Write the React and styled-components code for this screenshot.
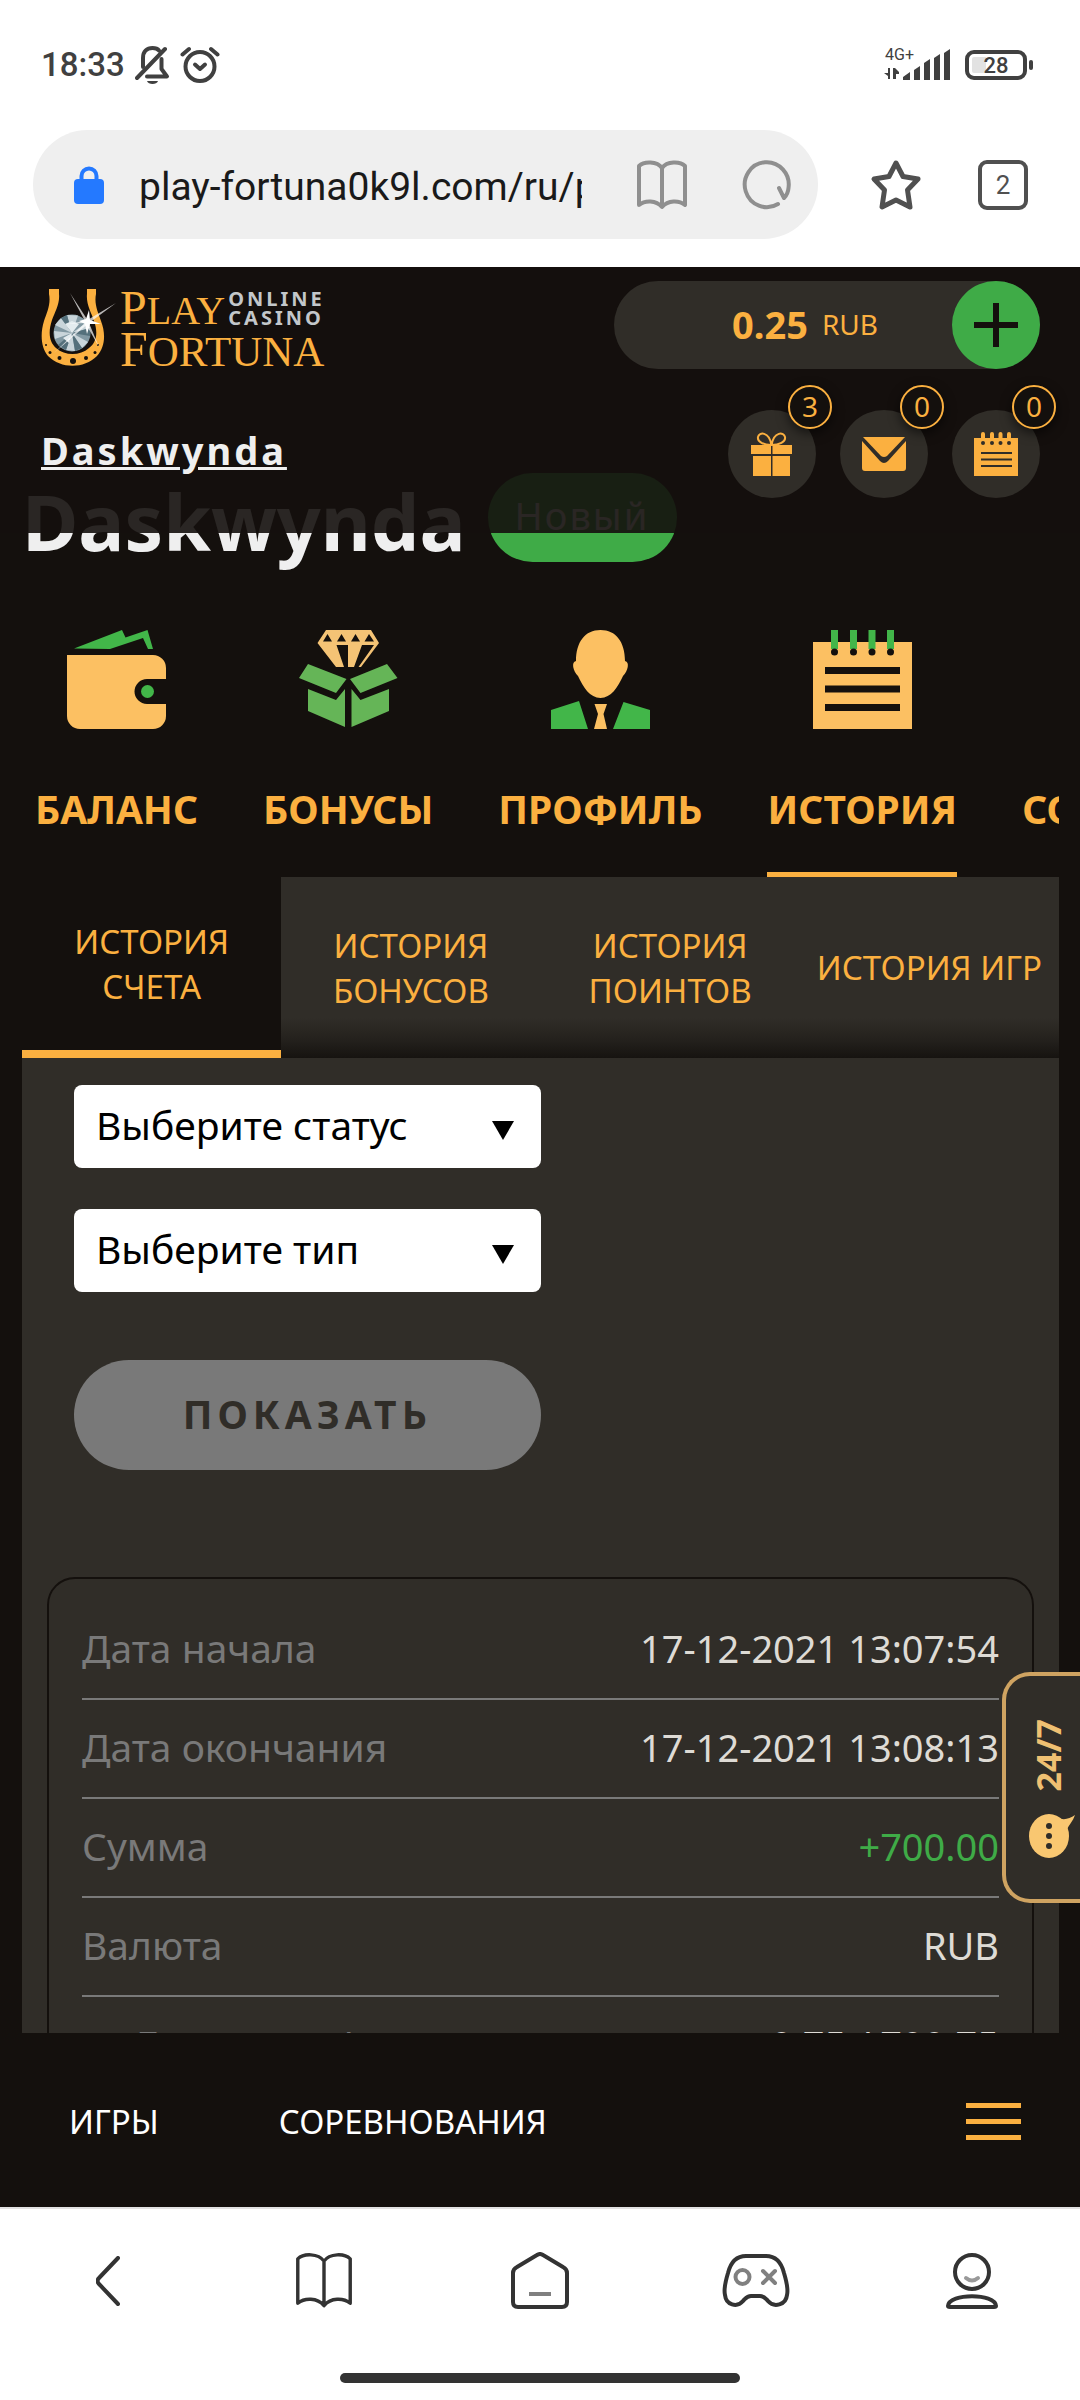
import React from "react";
import styled, { createGlobalStyle } from "styled-components";

const navItems = [
  { label: "БАЛАНС", icon: <WalletIcon /> },
  { label: "БОНУСЫ", icon: <BoxIcon /> },
  { label: "ПРОФИЛЬ", icon: <ManIcon /> },
  { label: "ИСТОРИЯ", icon: <NotebookIcon />, active: true },
  { label: "СОРЕВНОВАНИЯ" },
];

const tabs = ["ИСТОРИЯ СЧЕТА", "ИСТОРИЯ БОНУСОВ", "ИСТОРИЯ ПОИНТОВ", "ИСТОРИЯ ИГР"];

const rows = [
  { label: "Дата начала", value: "17-12-2021 13:07:54" },
  { label: "Дата окончания", value: "17-12-2021 13:08:13" },
  { label: "Сумма", value: "+700.00", positive: true },
  { label: "Валюта", value: "RUB" },
  { label: "Баланс до / после", value: "0.75 / 700.75", indent: true },
];

const App = () => {
  return (
    <Phone>
      <GlobalStyle />

      {/* Android status bar */}
      <StatusBar>
        <StatusGroup>
          <Clock>18:33</Clock>
          <BellOffIcon />
          <AlarmIcon />
        </StatusGroup>
        <StatusGroup>
          <Signal>
            <Network>4G+</Network>
            <SignalIcon />
          </Signal>
          <Battery>28</Battery>
        </StatusGroup>
      </StatusBar>

      {/* Browser address bar */}
      <AddressBar>
        <UrlPill>
          <LockIcon />
          <UrlInput
            aria-label="Адрес"
            defaultValue="play-fortuna0k9l.com/ru/profile"
          />
          <BareButton type="button" aria-label="Режим чтения">
            <ReaderIcon />
          </BareButton>
          <BareButton type="button" aria-label="Обновить">
            <ReloadIcon />
          </BareButton>
        </UrlPill>
        <BareButton type="button" aria-label="В закладки">
          <StarIcon />
        </BareButton>
        <TabCount type="button">2</TabCount>
      </AddressBar>

      <Site>
        <SiteHeader>
          <HeaderRow>
            <Logo href="#">
              <HorseshoeIcon />
              <LogoText>
                <LogoTop>
                  <LogoWord $small>
                    <b>P</b>LAY
                  </LogoWord>
                  <LogoNote>
                    ONLINE
                    <br />
                    CASINO
                  </LogoNote>
                </LogoTop>
                <LogoWord>
                  <b>F</b>ORTUNA
                </LogoWord>
              </LogoText>
            </Logo>
            <BalancePill>
              <Amount>
                <strong>0.25</strong>
                <span>RUB</span>
              </Amount>
              <AddButton type="button" aria-label="Пополнить">
                <svg width="46" height="46" viewBox="0 0 46 46">
                  <path d="M23 1V45M1 23H45" stroke="#14100d" strokeWidth="6" />
                </svg>
              </AddButton>
            </BalancePill>
          </HeaderRow>
          <HeaderRow>
            <UserLink href="#">Daskwynda</UserLink>
            <Shortcuts>
              <RoundButton type="button" aria-label="Подарки">
                <GiftIcon />
                <Counter>3</Counter>
              </RoundButton>
              <RoundButton type="button" aria-label="Сообщения">
                <MailIcon />
                <Counter>0</Counter>
              </RoundButton>
              <RoundButton type="button" aria-label="Заметки">
                <NotepadIcon />
                <Counter>0</Counter>
              </RoundButton>
            </Shortcuts>
          </HeaderRow>
        </SiteHeader>

        <Page>
          <TitleRow>
            <Title>Daskwynda</Title>
            <Status>Новый</Status>
          </TitleRow>

          <MainNav>
            {navItems.map((item) => (
              <NavLink key={item.label} href="#" $active={item.active}>
                <NavIcon>{item.icon}</NavIcon>
                <NavLabel>{item.label}</NavLabel>
              </NavLink>
            ))}
          </MainNav>

          <Tabs>
            {tabs.map((tab, i) => (
              <Tab key={tab} type="button" $active={i === 0}>
                {tab}
              </Tab>
            ))}
          </Tabs>

          <Panel>
            <Filters>
              <SelectWrap>
                <Select aria-label="Статус">
                  <option>Выберите статус</option>
                </Select>
                <ArrowIcon />
              </SelectWrap>
              <SelectWrap>
                <Select aria-label="Тип">
                  <option>Выберите тип</option>
                </Select>
                <ArrowIcon />
              </SelectWrap>
              <SubmitButton type="button">ПОКАЗАТЬ</SubmitButton>
            </Filters>

            <Card>
              <Table>
                <tbody>
                  {rows.map((row) => (
                    <tr key={row.label}>
                      <Key scope="row" $indent={row.indent}>
                        {row.label}
                      </Key>
                      <Value $positive={row.positive}>{row.value}</Value>
                    </tr>
                  ))}
                </tbody>
              </Table>
            </Card>
          </Panel>
        </Page>

        <BottomMenu>
          <a href="#">ИГРЫ</a>
          <a href="#">СОРЕВНОВАНИЯ</a>
          <Burger type="button" aria-label="Меню">
            <i />
            <i />
            <i />
          </Burger>
        </BottomMenu>

        <Support type="button">
          <ChatIcon />
          <SupportText>24/7</SupportText>
        </Support>
      </Site>

      {/* Browser toolbar */}
      <Toolbar>
        <BareButton type="button" aria-label="Назад">
          <BackIcon />
        </BareButton>
        <BareButton type="button" aria-label="Чтение">
          <ReaderIcon dark />
        </BareButton>
        <BareButton type="button" aria-label="Домой">
          <HomeIcon />
        </BareButton>
        <BareButton type="button" aria-label="Игры">
          <GamepadIcon />
        </BareButton>
        <BareButton type="button" aria-label="Профиль">
          <UserIcon />
        </BareButton>
      </Toolbar>
      <GestureArea>
        <GestureBar />
      </GestureArea>
    </Phone>
  );
};

// Icons
function BellOffIcon() {
  return (
    <svg width="35" height="38" viewBox="0 0 35 38" fill="none" stroke="#404040" strokeLinecap="round" strokeLinejoin="round">
      <path d="M8 21V12C8 5 12 2 17.500 2C20 2 22.500 2.500 24 4.500" strokeWidth="4" />
      <path d="M30 3L2 32" strokeWidth="4" />
      <path d="M26.500 13V23L32 30.500H12" strokeWidth="4" />
      <path d="M12 35H23C22 39 13 39 12 35Z" fill="#404040" stroke="none" />
    </svg>
  );
}

function AlarmIcon() {
  return (
    <svg width="40" height="38" viewBox="0 0 40 38" fill="none" stroke="#404040" strokeLinecap="round" strokeLinejoin="round">
      <circle cx="20" cy="20.500" r="14.500" strokeWidth="4" />
      <path d="M2.500 8.500L9 3M37.500 8.500L31 3" strokeWidth="4" />
      <path d="M15 18.500L20 23L25 18.500" strokeWidth="4" />
    </svg>
  );
}

function SignalIcon() {
  return (
    <svg width="67" height="32" viewBox="0 0 67 32" fill="#404040">
      <path d="M6 19V30H4V27L0 24H4V19ZM9 30V19H11L15 23V25H12V30Z" />
      <path d="M19 28L26 23V31H19ZM30 21L36 17V31H30ZM40 14L46 10V31H40ZM50 9L56 5V31H50ZM60 4L66 0V31H60Z" />
    </svg>
  );
}

function LockIcon() {
  return (
    <svg width="30" height="38" viewBox="0 0 30 38">
      <path d="M7.500 16V10A7.500 7.500 0 0 1 22.500 10V16" fill="none" stroke="#2479ff" strokeWidth="4" />
      <rect y="13" width="30" height="25" rx="4" fill="#2479ff" />
    </svg>
  );
}

function ReaderIcon({ dark }) {
  return (
    <svg width={dark ? 60 : 52} height={dark ? 57 : 50} viewBox="0 0 52 50" fill="none" stroke={dark ? "#333" : "#8f8f8f"} strokeWidth={dark ? 3 : 4} strokeLinejoin="round">
      <path d="M26 8C21 1 8 1 3 6V45C9 40 20 40 26 47C32 40 43 40 49 45V6C44 1 31 1 26 8ZV47" />
    </svg>
  );
}

function ReloadIcon() {
  return (
    <svg width="50" height="50" viewBox="0 0 50 50" fill="none" stroke="#8f8f8f" strokeWidth="4" strokeLinecap="round" strokeLinejoin="round">
      <path d="M36 44A22 22.500 0 1 1 46.500 28Q46 34 42 38L37 28" />
    </svg>
  );
}

function StarIcon() {
  return (
    <svg width="52" height="52" viewBox="0 0 52 52" fill="none" stroke="#505050" strokeWidth="5" strokeLinejoin="round">
      <path d="M26 4L33 17.500L48 20L37.500 31L40 48L26 41L12 48L14.500 31L4 20L19 17.500Z" />
    </svg>
  );
}

function HorseshoeIcon() {
  return (
    <svg width="79" height="79" viewBox="0 0 79 79">
      <path
        d="M8 1H18V6C19 16 14 24 11 32C7 44 8 54 15 60C24 68 39 68 48 60C56 54 57 44 53 33C50 24 45 16 46 6V1H55V6C53 16 57 24 60 33C65 46 64 59 56 68C43 81 20 81 7 68C0 60 -1 46 3 33C6 24 10 16 8 6Z"
        fill="#fbb040"
      />
      <g fill="#14100d">
        <circle cx="32" cy="73" r="3" />
        <circle cx="18.500" cy="70" r="2" />
        <circle cx="45" cy="70" r="2" />
        <circle cx="9" cy="64.500" r="1.500" />
        <circle cx="54" cy="64.500" r="1.500" />
        <circle cx="5" cy="57" r="1" />
        <circle cx="57" cy="57" r="1" />
      </g>
      <circle cx="31" cy="45" r="18.500" fill="#8198a2" />
      <path d="M31 45L14 37L20 30ZM31 45L26 27L37 27.500ZM31 45L49 40L46 34ZM31 45L47 54L41 60ZM31 45L34 63L25 62ZM31 45L14 51L13 43Z" fill="#c9d5da" />
      <path d="M31 45L20 30L26 27ZM31 45L49 40V48ZM31 45L41 60L34 63ZM31 45L25 62L17 57Z" fill="#54707b" />
      <path d="M31 45L24 36L31 33L38 36ZM31 45L22 50L28 55Z" fill="#e4ecef" />
      <path d="M29 5L46.500 32L75 15L48 35L58 59L45.500 37L13 65L44 35L26 36L44 33Z" fill="#ffffff" opacity="0.7" />
      <path d="M48 22L49 32L60 36L49 36L46 46L44 36L38 33L45 31Z" fill="#ffffff" />
    </svg>
  );
}

function GiftIcon() {
  return (
    <svg width="42" height="45" viewBox="0 0 42 45" fill="#fbb040">
      <path d="M20.500 13C13 13 6 10 7 5C8 0 18 -1 20.500 13C23 -1 33 0 34 5C35 10 28 13 20.500 13Z" fill="none" stroke="#fbb040" strokeWidth="2" />
      <path d="M0 13H20V22H0ZM21.500 13H41V22H21.500ZM2 24H20V44H2ZM21.500 24H39V44H21.500Z" />
    </svg>
  );
}

function MailIcon() {
  return (
    <svg width="44" height="34" viewBox="0 0 44 34" fill="#fbb040">
      <path d="M1 0H43L25 19Q22 21 19 19Z" />
      <path d="M0 4L18 24Q22 28 26 24L44 4V31Q44 34 41 34H3Q0 34 0 31Z" />
    </svg>
  );
}

function NotepadIcon() {
  return (
    <svg width="44" height="45" viewBox="0 0 44 45">
      <path d="M0 6H44V44H0Z" fill="#fbb040" />
      <path d="M9 2V8M18 2V8M26.500 2V8M35 2V8" stroke="#fbb040" strokeWidth="4" strokeLinecap="round" />
      <path d="M7 21H38M7 27.500H38M7 34H38" stroke="#302d28" strokeWidth="2" />
      <g fill="#302d28">
        <circle cx="9" cy="11" r="2" />
        <circle cx="18" cy="11" r="2" />
        <circle cx="26.500" cy="11" r="2" />
        <circle cx="35" cy="11" r="2" />
      </g>
    </svg>
  );
}

function WalletIcon() {
  return (
    <svg width="99" height="99" viewBox="0 0 99 99">
      <path d="M7 18.500L55 0L58.500 7.500L80.500 0L86 19H81L76 8L43 19Z" fill="#42b649" />
      <path d="M0 25H86A13 13 0 0 1 99 38V49H80A12.500 12.500 0 0 0 80 74H99V86A13 13 0 0 1 86 99H13A13 13 0 0 1 0 86Z" fill="#fcc062" />
      <circle cx="80.500" cy="61.500" r="6.500" fill="#42b649" />
    </svg>
  );
}

function BoxIcon() {
  return (
    <svg width="99" height="99" viewBox="0 0 99 99">
      <path
        d="M27 0H72L80 13L62 37H59.500L75 15H63L55 37H49V15H37.500L45 37H37L18.500 13ZM24 11.500H33L28.500 4ZM38 11.500H47L42.500 4ZM52 11.500H61L56.500 4ZM65.500 11.500H75L70 4Z"
        fill="#f4c375"
        fillRule="evenodd"
      />
      <path
        d="M9 34L47.500 49L37 63L0 48ZM9 59L37 70L46 59V97L9 81ZM88 34L51 49L61.500 63L98.500 48ZM90 59L61.500 70L52.500 59V97L90 81Z"
        fill="#65b557"
      />
    </svg>
  );
}

function ManIcon() {
  return (
    <svg width="99" height="99" viewBox="0 0 99 99">
      <path
        d="M49.500 0C65 0 74 12 74 31C79 32 77 41 72 46C67 57 60 68 49.500 68C39 68 32 57 27 46C22 41 20 32 25 31C25 12 34 0 49.500 0Z"
        fill="#fcc062"
      />
      <path d="M0 80L28 71L37 99H0ZM99 80L72.500 72L62 99H99Z" fill="#42b649" />
      <path d="M43.500 74H56L52.500 84L56 99H43L47 84Z" fill="#fcc062" />
    </svg>
  );
}

function NotebookIcon() {
  return (
    <svg width="99" height="99" viewBox="0 0 99 99">
      <path d="M0 12H99V99H0Z" fill="#fcc062" />
      <path d="M21.500 0V19M40.500 0V19M59 0V19M77.500 0V19" stroke="#42b649" strokeWidth="7" />
      <path d="M12 40.500H87M12 59H87M12 77.500H87" stroke="#14100d" strokeWidth="7" />
      <g fill="#14100d">
        <circle cx="21.500" cy="22" r="3.500" />
        <circle cx="40.500" cy="22" r="3.500" />
        <circle cx="59" cy="22" r="3.500" />
        <circle cx="77.500" cy="22" r="3.500" />
      </g>
    </svg>
  );
}

function ArrowIcon() {
  return (
    <Arrow width="22" height="19" viewBox="0 0 22 19">
      <path d="M0 0H22L11 19Z" />
    </Arrow>
  );
}

function ChatIcon() {
  return (
    <svg width="46" height="50" viewBox="0 0 46 50">
      <ellipse cx="20" cy="27" rx="20" ry="22" fill="#f9c771" />
      <path d="M28 8C34 12 40 10 46 6C44 12 40 16 38 20Z" fill="#f9c771" />
      <g fill="#302d28">
        <circle cx="20" cy="17" r="3" />
        <circle cx="20" cy="27" r="3" />
        <circle cx="20" cy="37" r="3" />
      </g>
    </svg>
  );
}

function BackIcon() {
  return (
    <svg width="24" height="50" viewBox="0 0 24 50" fill="none" stroke="#333" strokeWidth="4" strokeLinecap="round">
      <path d="M22 2L3 22Q0 25 3 28L22 48" />
    </svg>
  );
}

function HomeIcon() {
  return (
    <svg width="58" height="58" viewBox="0 0 58 58" fill="none" stroke="#333" strokeWidth="4" strokeLinejoin="round">
      <path d="M26 3Q29 1 32 3L52 15Q56 17 56 21V50Q56 55 51 55H7Q2 55 2 50V21Q2 17 6 15Z" />
      <path d="M18 42H40" stroke="#808080" />
    </svg>
  );
}

function GamepadIcon() {
  return (
    <svg width="68" height="56" viewBox="0 0 68 56" fill="none" stroke="#333" strokeWidth="4" strokeLinecap="round">
      <path d="M24 3H44C56 3 60 12 62 20C65 30 66 38 65 42C64 52 52 55 46 48C43 45 42 43 38 43H29C25 43 24 45 21 48C15 55 4 52 3 42C2 38 3 30 6 20C8 12 12 3 24 3Z" />
      <g stroke="#808080">
        <circle cx="20.500" cy="24" r="7" />
        <path d="M41 18L53 30M53 18L41 30" />
      </g>
    </svg>
  );
}

function UserIcon() {
  return (
    <svg width="52" height="58" viewBox="0 0 52 58" fill="none" stroke="#333" strokeWidth="4" strokeLinecap="round" strokeLinejoin="round">
      <circle cx="26" cy="20" r="17" />
      <path d="M2 54C3 41 49 41 50 54C50 55 49 55 48 55H4C3 55 2 55 2 54Z" />
      <path d="M20 26Q26 31 32 26" stroke="#999" />
    </svg>
  );
}

// Styled Components
const GlobalStyle = createGlobalStyle`
  * {
    box-sizing: border-box;
  }

  body {
    margin: 0;
    background: #fff;
    font-family: "Noto Sans", sans-serif;
  }

  button, input, select {
    font-family: inherit;
    margin: 0;
  }

  a {
    color: inherit;
    text-decoration: none;
  }

  svg {
    display: block;
    flex: none;
  }
`;

const Phone = styled.div`
  display: flex;
  flex-direction: column;
  height: 100vh;
  overflow: hidden;
`;

const StatusBar = styled.div`
  display: flex;
  justify-content: space-between;
  align-items: center;
  height: 130px;
  padding: 0 47px 0 41px;
  font-family: Roboto, sans-serif;
  color: #404040;
`;

const StatusGroup = styled.div`
  display: flex;
  align-items: center;
  gap: 10px;
`;

const Clock = styled.span`
  font-size: 33px;
  font-weight: 500;
  line-height: 40px;
`;

const Signal = styled.div`
  position: relative;
  padding-right: 4px;
`;

const Network = styled.span`
  position: absolute;
  left: 1px;
  top: -4px;
  font-size: 16px;
  line-height: 20px;
`;

const Battery = styled.div`
  position: relative;
  width: 62px;
  height: 30px;
  border: 4px solid #404040;
  border-radius: 9px;
  background: linear-gradient(90deg, #e2e2e2 32%, #fff 32%);
  box-shadow: inset 0 0 0 3px #fff;
  font-size: 22px;
  font-weight: 500;
  line-height: 23px;
  text-align: center;
  margin-right: 6px;

  &::after {
    content: "";
    position: absolute;
    right: -10px;
    top: 6px;
    width: 4px;
    height: 10px;
    border-radius: 2px;
    background: #404040;
  }
`;

const AddressBar = styled.div`
  display: flex;
  align-items: center;
  gap: 52px;
  padding: 0 52px 28px 33px;
`;

const UrlPill = styled.div`
  flex: 1;
  min-width: 0;
  display: flex;
  align-items: center;
  height: 109px;
  padding: 0 26px 0 41px;
  border-radius: 55px;
  background: #efefef;
  gap: 54px;
`;

const UrlInput = styled.input`
  flex: 1;
  min-width: 0;
  margin-left: -19px;
  padding: 4px 0 0;
  border: 0;
  outline: 0;
  background: none;
  color: #1a1a1a;
  font-family: Roboto, sans-serif;
  font-size: 39px;
  line-height: 48px;
`;

const BareButton = styled.button`
  display: flex;
  align-items: center;
  justify-content: center;
  padding: 0;
  border: 0;
  background: none;
  cursor: pointer;
`;

const TabCount = styled.button`
  width: 50px;
  height: 50px;
  margin-left: 4px;
  padding: 0;
  border: 4px solid #505050;
  border-radius: 9px;
  background: none;
  color: #505050;
  font-family: Roboto, sans-serif;
  font-size: 26px;
  font-weight: 400;
`;

const Site = styled.div`
  position: relative;
  flex: 1;
  min-height: 0;
  display: flex;
  flex-direction: column;
  background: #14100d;
`;

const SiteHeader = styled.header`
  position: absolute;
  top: 0;
  left: 0;
  right: 0;
  z-index: 2;
  height: 266px;
  padding: 14px 40px 0 41px;
  background: rgba(20, 16, 13, 0.9);
`;

const HeaderRow = styled.div`
  display: flex;
  justify-content: space-between;
  height: 88px;
  margin-bottom: 41px;
`;

const Logo = styled.a`
  display: flex;
  padding-top: 7px;
`;

const LogoText = styled.span`
  display: flex;
  flex-direction: column;
`;

const LogoTop = styled.span`
  display: flex;
  gap: 3px;
  height: 41px;
`;

const LogoWord = styled.span`
  height: 41px;
  font-family: "Liberation Serif", serif;
  font-size: ${(props) => (props.$small ? "40px" : "43px")};
  line-height: 40px;
  color: #fbb040;

  b {
    font-size: ${(props) => (props.$small ? "48px" : "50px")};
    font-weight: 400;
    line-height: 40px;
  }
`;

const LogoNote = styled.span`
  padding-top: 1px;
  font-size: 20px;
  font-weight: 700;
  line-height: 19px;
  letter-spacing: 3px;
  color: #c3c7ca;
`;

const BalancePill = styled.div`
  display: flex;
  align-items: center;
  width: 426px;
  border-radius: 44px;
  background: #302d28;
`;

const Amount = styled.div`
  flex: 1;
  display: flex;
  align-items: center;
  justify-content: flex-end;
  gap: 14px;
  padding: 0 74px 2px 0;
  color: #fbb040;

  strong {
    font-size: 38px;
    line-height: 52px;
  }

  span {
    font-size: 28px;
    line-height: 40px;
  }
`;

const AddButton = styled(BareButton)`
  width: 88px;
  height: 88px;
  border-radius: 50%;
  background: #3fab47;
`;

const UserLink = styled.a`
  font-size: 38px;
  font-weight: 700;
  line-height: 80px;
  letter-spacing: 3px;
  color: #efefef;
  text-decoration: underline;
  text-decoration-thickness: 3px;
`;

const Shortcuts = styled.div`
  display: flex;
  gap: 24px;
`;

const RoundButton = styled(BareButton)`
  position: relative;
  width: 88px;
  height: 88px;
  border-radius: 50%;
  background: #302d28;
`;

const Counter = styled.span`
  position: absolute;
  top: -25px;
  right: -16px;
  width: 44px;
  height: 44px;
  border: 2px solid #fbb040;
  border-radius: 50%;
  background: #14100d;
  box-shadow: 0 4px 12px rgba(0, 0, 0, 0.6);
  color: #fbb040;
  font-size: 28px;
  line-height: 39px;
`;

const Page = styled.main`
  flex: 1;
  min-height: 0;
  overflow: hidden;
  padding: 206px 21px 0 22px;
`;

const TitleRow = styled.div`
  display: flex;
  gap: 22px;
  height: 89px;
`;

const Title = styled.h1`
  margin: 0;
  font-size: 77px;
  font-weight: 700;
  line-height: 97px;
  color: #efefef;
`;

const Status = styled.span`
  height: 89px;
  padding: 0 28px 0 27px;
  border-radius: 45px;
  background: #3fab47;
  color: #efefef;
  font-size: 38px;
  line-height: 85px;
  letter-spacing: 2px;
`;

const MainNav = styled.nav`
  display: flex;
  gap: 65px;
  margin-top: 68px;
  padding-left: 13px;
  overflow: hidden;
`;

const NavLink = styled.a`
  display: flex;
  flex-direction: column;
  align-items: center;
  flex: none;
  padding-bottom: 36px;
  border-bottom: 5px solid ${(props) => (props.$active ? "#fbb040" : "transparent")};
`;

const NavIcon = styled.span`
  height: 99px;
  margin-bottom: 52px;
`;

const NavLabel = styled.span`
  font-size: 39px;
  font-weight: 700;
  line-height: 55px;
  color: #fbb040;
`;

const Tabs = styled.div`
  display: flex;
  background: linear-gradient(#302d28 78%, #24211d 90%, #161310);
`;

const Tab = styled.button`
  flex: 1 1 0;
  height: 181px;
  padding: 0 10px;
  border: 0;
  border-bottom: ${(props) => (props.$active ? "8px solid #fbb040" : "0")};
  background: ${(props) => (props.$active ? "#14100d" : "none")};
  color: #fbb040;
  font-size: 33px;
  line-height: 45px;
  cursor: pointer;
`;

const Panel = styled.section`
  padding: 27px 25px 0;
  background: #302d28;
`;

const Filters = styled.form`
  display: flex;
  flex-direction: column;
  width: 50%;
  padding: 0 0 0 27px;
  margin-bottom: 107px;
`;

const SelectWrap = styled.div`
  position: relative;
  margin-bottom: 41px;
`;

const Select = styled.select`
  display: block;
  width: 100%;
  height: 83px;
  padding: 0 60px 4px 22px;
  border: 0;
  border-radius: 8px;
  appearance: none;
  background: #fff;
  color: #000;
  font-size: 39px;
`;

const Arrow = styled.svg`
  position: absolute;
  right: 27px;
  top: 36px;
  pointer-events: none;
`;

const SubmitButton = styled.button`
  height: 110px;
  margin-top: 27px;
  padding: 0 0 4px;
  border: 0;
  border-radius: 55px;
  background: #797979;
  color: #302d28;
  font-size: 39px;
  font-weight: 700;
  letter-spacing: 5px;
`;

const Card = styled.div`
  padding: 22px 33px;
  border: 2px solid #14100d;
  border-radius: 28px;
`;

const Table = styled.table`
  width: 100%;
  border-spacing: 0;
  font-size: 38px;
  line-height: 52px;

  th, td {
    height: 99px;
    padding: 0 0 3px;
    border-bottom: 2px solid #797979;
  }
`;

const Key = styled.th`
  font-size: 39px;
  font-weight: 400;
  text-align: left;
  text-indent: ${(props) => (props.$indent ? "54px" : "0")};
  color: #797979;
`;

const Value = styled.td`
  text-align: right;
  color: ${(props) => (props.$positive ? "#3fab47" : "#dedbd5")};
`;

const BottomMenu = styled.nav`
  position: relative;
  z-index: 1;
  display: flex;
  align-items: center;
  gap: 120px;
  height: 174px;
  padding: 2px 59px 0 69px;
  background: #14100d;
  color: #fff;
  font-size: 33px;
`;

const Burger = styled(BareButton)`
  flex-direction: column;
  gap: 11px;
  margin-left: auto;

  i {
    width: 55px;
    height: 5px;
    background: #fbb040;
  }
`;

const Support = styled.button`
  position: absolute;
  right: 0;
  bottom: 304px;
  z-index: 2;
  display: flex;
  flex-direction: column-reverse;
  align-items: center;
  gap: 18px;
  width: 78px;
  height: 231px;
  padding: 0 0 40px 18px;
  border: 4px solid #cfa361;
  border-right: 0;
  border-radius: 28px 0 0 28px;
  background: #302d28;
  cursor: pointer;
`;

const SupportText = styled.span`
  writing-mode: vertical-rl;
  transform: rotate(180deg);
  margin-right: 8px;
  font-size: 34px;
  font-weight: 700;
  line-height: 40px;
  color: #efc072;
`;

const Toolbar = styled.nav`
  display: grid;
  grid-template-columns: repeat(5, 1fr);
  height: 145px;
  border-top: 2px solid #e2e2e2;
`;

const GestureArea = styled.div`
  display: flex;
  justify-content: center;
  align-items: center;
  height: 48px;
  padding-top: 4px;
`;

const GestureBar = styled.div`
  width: 37%;
  height: 10px;
  border-radius: 5px;
  background: #333;
`;

export default App;
